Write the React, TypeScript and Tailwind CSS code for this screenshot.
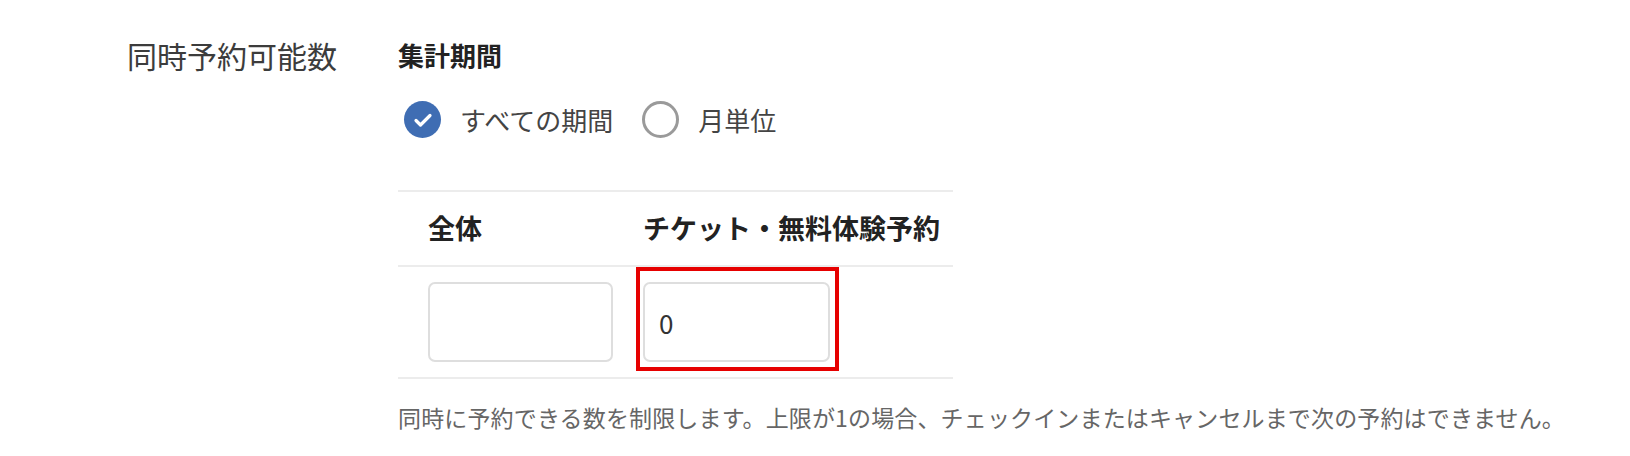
import React, { useState } from "react";

function RadioOption({
  checked,
  label,
  onSelect,
}: {
  checked: boolean;
  label: string;
  onSelect: () => void;
}) {
  return (
    <button
      type="button"
      onClick={onSelect}
      className="flex items-center gap-[19px] text-[26px] leading-[36px] text-[#444]"
    >
      {checked ? (
        <span className="flex h-[37px] w-[37px] items-center justify-center rounded-full bg-[#3f6db3]">
          <svg width="24" height="24" viewBox="0 0 24 24" fill="none">
            <path
              d="M5 12.5l4.5 4.5L19 7.5"
              stroke="white"
              strokeWidth="3.2"
              strokeLinecap="round"
              strokeLinejoin="round"
            />
          </svg>
        </span>
      ) : (
        <span className="h-[37px] w-[37px] rounded-full border-[3px] border-[#9a9a9a] bg-white" />
      )}
      <span>{label}</span>
    </button>
  );
}

export default function App() {
  const [period, setPeriod] = useState<"all" | "month">("all");
  const [total, setTotal] = useState("");
  const [ticket, setTicket] = useState("0");

  return (
    <div
      className="h-[456px] w-[1630px] bg-white"
      style={{ fontFamily: '"Noto Sans CJK JP", "Noto Sans", sans-serif' }}
    >
      <div className="flex pt-[40px]">
        {/* Field label */}
        <div className="w-[398px] pl-[127px] text-[30px] leading-[30px] text-[#3c3c3c]">
          同時予約可能数
        </div>

        <div className="flex flex-col">
          <h3 className="text-[26px] font-bold leading-[30px] text-[#222]">
            集計期間
          </h3>

          <div className="mt-[31px] flex items-center gap-[29px] pl-[6px]">
            <RadioOption
              checked={period === "all"}
              label="すべての期間"
              onSelect={() => setPeriod("all")}
            />
            <RadioOption
              checked={period === "month"}
              label="月単位"
              onSelect={() => setPeriod("month")}
            />
          </div>

          {/* Limits table */}
          <div className="mt-[52px] w-[555px]">
            <div className="grid h-[75px] grid-cols-[245px_1fr] items-center border-t-2 border-[#ececec] text-[27px] font-bold text-[#222]">
              <div className="pl-[30px]">全体</div>
              <div className="whitespace-nowrap">チケット・無料体験予約</div>
            </div>
            <div className="grid grid-cols-[245px_1fr] border-y-2 border-[#ececec] pt-[15px] pb-[15px]">
              <div className="pl-[30px]">
                <input
                  type="text"
                  value={total}
                  onChange={(e) => setTotal(e.target.value)}
                  className="h-[80px] w-[185px] rounded-[7px] border-2 border-[#dedede] px-[16px] text-[26px] text-[#333] outline-none"
                />
              </div>
              <div className="relative w-[187px]">
                <input
                  type="text"
                  value={ticket}
                  onChange={(e) => setTicket(e.target.value)}
                  className="h-[80px] w-[187px] rounded-[7px] border-2 border-[#dedede] px-[14px] text-[26px] text-[#333] outline-none"
                />
                {/* highlight annotation */}
                <div className="pointer-events-none absolute -top-[15px] -right-[9px] -bottom-[9px] -left-[7px] border-4 border-[#e60000]" />
              </div>
            </div>
          </div>

          <p className="mt-[24px] whitespace-nowrap text-[23px] leading-[28px] tracking-[0.15px] text-[#666]">
            同時に予約できる数を制限します。上限が1の場合、チェックインまたはキャンセルまで次の予約はできません。
          </p>
        </div>
      </div>
    </div>
  );
}
